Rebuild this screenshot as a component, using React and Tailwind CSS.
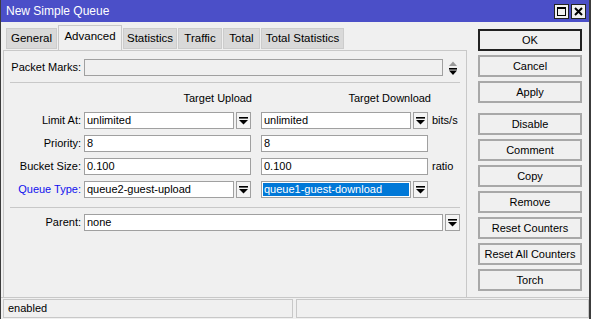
import React from 'react';

const font = { fontFamily: '"Liberation Sans", Arial, sans-serif' };

const DropIcon = () => (
  <svg width="9" height="8" viewBox="0 0 9 8">
    <rect x="0" y="0" width="9" height="1.6" fill="#000" />
    <polygon points="0,3 9,3 4.5,7.5" fill="#000" />
  </svg>
);

const DropButton = () => (
  <div className="w-[15px] h-[17px] border border-[#a0a0a0] bg-[#f4f4f4] flex items-center justify-center shrink-0">
    <DropIcon />
  </div>
);

const Field = ({ value, width, selected, disabled }) => (
  <div
    className={`h-[17px] border border-[#a0a0a0] flex items-center shrink-0 ${disabled ? 'bg-[#f0f0f0]' : 'bg-white'}`}
    style={{ width }}
  >
    {selected ? (
      <div className="h-[13px] mx-px flex-1 bg-[#0078d7] text-white leading-[13px] pl-px whitespace-nowrap">{value}</div>
    ) : (
      <span className="pl-[2px] leading-[15px] whitespace-nowrap">{value}</span>
    )}
  </div>
);

const Row = ({ label, blue, children }) => (
  <div className="flex items-center h-[17px]">
    <div className={`w-[80px] text-right pr-[3px] whitespace-nowrap ${blue ? 'text-[#1010ee]' : ''}`}>{label}</div>
    <div className="flex items-center">{children}</div>
  </div>
);

const Tab = ({ label, width, active }) =>
  active ? (
    <div
      className="h-[25px] border border-b-0 border-[#c8c8c8] bg-[#f0f0f0] flex items-center justify-center -mb-px relative z-10 pb-[2px]"
      style={{ width }}
    >
      {label}
    </div>
  ) : (
    <div
      className="h-[21px] border border-[#cccccc] bg-[#d9d9d9] flex items-center justify-center mt-[3px]"
      style={{ width }}
    >
      {label}
    </div>
  );

const SideButton = ({ label, primary }) => (
  <div
    className={`h-[22px] w-[104px] flex items-center justify-center bg-[#f0f0f0] ${
      primary ? 'border-2 border-[#222]' : 'border-2 border-[#a8a8a8]'
    }`}
  >
    {label}
  </div>
);

export default function App() {
  return (
    <div
      className="w-[591px] h-[319px] bg-[#f0f0f0] text-[11px] text-black flex flex-col border-l border-r-2 border-[#3c3c3c] overflow-hidden"
      style={font}
    >
      {/* title bar */}
      <div className="h-[22px] bg-[#4b4fc8] flex items-center justify-between pl-[5px] pr-[3px] shrink-0">
        <span className="text-white text-[12px]">New Simple Queue</span>
        <div className="flex gap-[2px]">
          <div className="w-[15px] h-[15px] bg-[#f0f0f0] border border-[#222] flex items-center justify-center">
            <div className="w-[9px] h-[9px] border border-black border-t-2" />
          </div>
          <div className="w-[15px] h-[15px] bg-[#f0f0f0] border border-[#222] flex items-center justify-center">
            <svg width="9" height="9" viewBox="0 0 9 9">
              <path d="M1 1 L8 8 M8 1 L1 8" stroke="#000" strokeWidth="2" />
            </svg>
          </div>
        </div>
      </div>

      <div className="flex flex-1">
        {/* left panel */}
        <div className="w-[466px] pl-[2px] pt-[3px] flex flex-col">
          <div className="flex gap-px pl-[3px] h-[25px] text-[11.5px]">
            <Tab label="General" width={51} />
            <Tab label="Advanced" width={64} active />
            <Tab label="Statistics" width={54} />
            <Tab label="Traffic" width={44} />
            <Tab label="Total" width={37} />
            <Tab label="Total Statistics" width={83} />
          </div>
          <div className="flex-1 border border-b-0 border-[#c8c8c8] pt-[8px] flex flex-col">
            <Row label="Packet Marks:">
              <Field width={359} disabled />
              <div className="ml-[3px] w-[14px] flex justify-center">
                <svg width="10" height="14" viewBox="0 0 10 14">
                  <polygon points="1,5 9,5 5,0.5" fill="#9a9a9a" />
                  <rect x="1" y="7" width="8" height="1.6" fill="#000" />
                  <polygon points="1,9.5 9,9.5 5,14" fill="#000" />
                </svg>
              </div>
            </Row>
            <div className="h-px bg-[#c8c8c8] mx-[6px] mt-[6px]" />
            <div className="flex h-[14px] mt-[8px] leading-[14px]">
              <div className="w-[248px] text-right">Target Upload</div>
              <div className="w-[179px] text-right">Target Download</div>
            </div>
            <div className="flex flex-col gap-[6px] mt-[7px]">
              <Row label="Limit At:">
                <Field value="unlimited" width={150} />
                <div className="ml-[2px]"><DropButton /></div>
                <div className="ml-[10px]"><Field value="unlimited" width={150} /></div>
                <div className="ml-[2px]"><DropButton /></div>
                <span className="ml-[4px]">bits/s</span>
              </Row>
              <Row label="Priority:">
                <Field value="8" width={167} />
                <div className="ml-[10px]"><Field value="8" width={167} /></div>
              </Row>
              <Row label="Bucket Size:">
                <Field value="0.100" width={167} />
                <div className="ml-[10px]"><Field value="0.100" width={167} /></div>
                <span className="ml-[4px]">ratio</span>
              </Row>
              <Row label="Queue Type:" blue>
                <Field value="queue2-guest-upload" width={150} />
                <div className="ml-[2px]"><DropButton /></div>
                <div className="ml-[10px]"><Field value="queue1-guest-download" width={150} selected /></div>
                <div className="ml-[2px]"><DropButton /></div>
              </Row>
            </div>
            <div className="h-px bg-[#c8c8c8] mx-[6px] mt-[9px]" />
            <div className="mt-[6px]">
              <Row label="Parent:">
                <Field value="none" width={359} />
                <div className="ml-[2px]"><DropButton /></div>
              </Row>
            </div>
          </div>
        </div>

        {/* right buttons */}
        <div className="flex flex-col pl-[11px] pt-[7px]">
          <div className="flex flex-col gap-[4px]">
            <SideButton label="OK" primary />
            <SideButton label="Cancel" />
            <SideButton label="Apply" />
          </div>
          <div className="flex flex-col gap-[4px] mt-[10px]">
            <SideButton label="Disable" />
            <SideButton label="Comment" />
            <SideButton label="Copy" />
            <SideButton label="Remove" />
            <SideButton label="Reset Counters" />
            <SideButton label="Reset All Counters" />
            <SideButton label="Torch" />
          </div>
        </div>
      </div>

      {/* status bar */}
      <div className="h-[22px] border-t border-[#c8c8c8] flex gap-[3px] pl-[2px] pt-px shrink-0">
        <div className="w-[290px] h-[19px] border border-[#c8c8c8] flex items-center pl-[4px]">enabled</div>
        <div className="flex-1 h-[19px] border border-[#c8c8c8]" />
      </div>
    </div>
  );
}
